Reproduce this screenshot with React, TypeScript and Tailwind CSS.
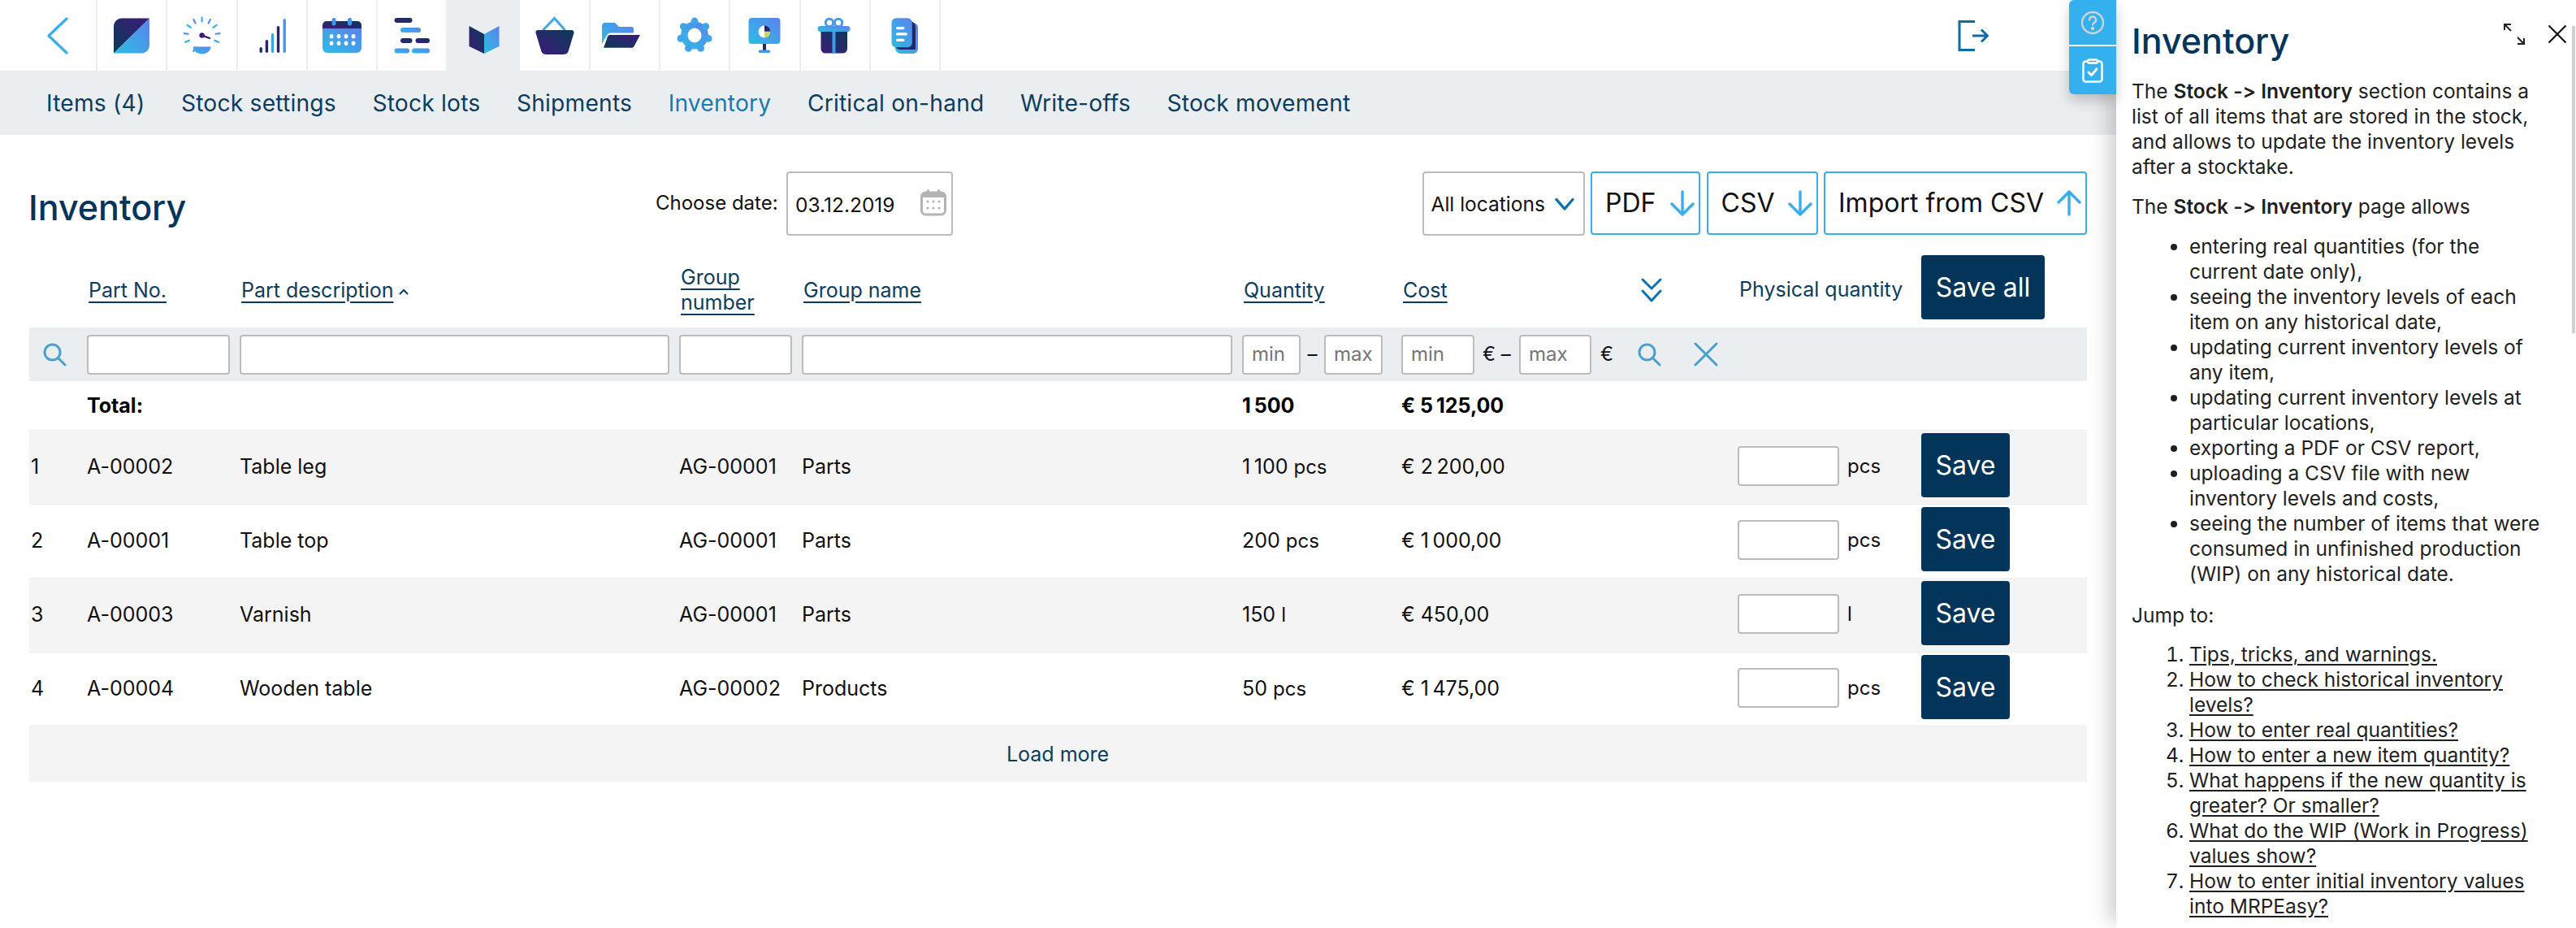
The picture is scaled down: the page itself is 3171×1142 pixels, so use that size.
import { ReactNode } from "react"

const rowGrid = "grid grid-cols-[71px_188px_541px_151px_542px_196px_275px_139px_226px_1fr] items-center"
const inputBox = "h-[49px] rounded-[4px] border-2 border-[#bcbcbc] bg-white"
const sortLink = "ml-[2px] text-[25px] leading-[31px] text-[#0c3c5e] underline decoration-2 underline-offset-[5px]"

const tabs = ["Items (4)", "Stock settings", "Stock lots", "Shipments", "Inventory", "Critical on-hand", "Write-offs", "Stock movement"]

const rows = [
  { n: 1, part: "A-00002", name: "Table leg", group: "AG-00001", groupName: "Parts", qty: "1\u2009100", unit: "pcs", cost: "€ 2\u2009200,00", odd: true },
  { n: 2, part: "A-00001", name: "Table top", group: "AG-00001", groupName: "Parts", qty: "200", unit: "pcs", cost: "€ 1\u2009000,00", odd: false },
  { n: 3, part: "A-00003", name: "Varnish", group: "AG-00001", groupName: "Parts", qty: "150", unit: "l", cost: "€ 450,00", odd: true },
  { n: 4, part: "A-00004", name: "Wooden table", group: "AG-00002", groupName: "Products", qty: "50", unit: "pcs", cost: "€ 1\u2009475,00", odd: false },
]

function Gradients() {
  return (
    <svg className="absolute h-0 w-0">
      <defs>
        <linearGradient id="light" x1="0" y1="1" x2="1" y2="0">
          <stop offset="0" stopColor="#2dbde2" />
          <stop offset="1" stopColor="#5b82ee" />
        </linearGradient>
        <linearGradient id="dark" x1="0" y1="1" x2="1" y2="0">
          <stop offset="0" stopColor="#3d1a7a" />
          <stop offset="1" stopColor="#0c3a58" />
        </linearGradient>
        <linearGradient id="darkUp" x1="0" y1="1" x2="1" y2="0">
          <stop offset="0" stopColor="#0c3a58" />
          <stop offset="1" stopColor="#3d1a7a" />
        </linearGradient>
      </defs>
    </svg>
  )
}

function Icon({ children }: { children: ReactNode }) {
  return (
    <svg viewBox="0 0 48 48" className="h-12 w-12 overflow-visible">
      {children}
    </svg>
  )
}

const gaugeTicks = [-90, -62, -35, -6, 22, 118, 158, 186, 215, 242]
const gearTeeth = [-90, -38.6, 12.8, 64.3, 115.7, 167.1, 218.6]

const navIcons: ReactNode[] = [
  <Icon>
    <path d="M46 2.5 2 45.5V13a10 10 0 0 1 10-10.5Z" fill="url(#darkUp)" />
    <path d="M46 2.5V35a10 10 0 0 1-10 10.5H2Z" fill="url(#light)" />
  </Icon>,
  <Icon>
    {gaugeTicks.map((a, i) => (
      <line
        key={a}
        x1={24.6 + 17 * Math.cos((a * Math.PI) / 180)}
        y1={23.5 + 17 * Math.sin((a * Math.PI) / 180)}
        x2={24.6 + 22 * Math.cos((a * Math.PI) / 180)}
        y2={23.5 + 22 * Math.sin((a * Math.PI) / 180)}
        stroke={i % 2 ? "#5a8bec" : "#36b0e6"}
        strokeWidth="2.2"
        strokeLinecap="round"
      />
    ))}
    <circle cx="24.6" cy="23.5" r="3.2" fill="#3d1a7a" />
    <line x1="24.6" y1="23.5" x2="34" y2="27" stroke="#3d1a7a" strokeWidth="2.2" strokeLinecap="round" />
    <path d="M13.6 37.5H35.6C35 43 30 46.5 24.6 46.5S14 43 13.6 37.5Z" fill="url(#light)" />
  </Icon>,
  <Icon>
    <rect x="8.5" y="38" width="3.4" height="7" rx="1.7" fill="#1d2f6a" />
    <rect x="15.7" y="29" width="3.4" height="16" rx="1.7" fill="#2a2470" />
    <rect x="22.8" y="21" width="3.4" height="24" rx="1.7" fill="#36a8e6" />
    <rect x="29.8" y="12" width="3.4" height="33" rx="1.7" fill="#2a2470" />
    <rect x="37.5" y="3" width="3.4" height="42" rx="1.7" fill="#4a95ea" />
  </Icon>,
  <Icon>
    <path d="M0 15V11a5 5 0 0 1 5-5h38a5 5 0 0 1 5 5v4Z" fill="url(#dark)" />
    <path d="M0 15h48v24a6 6 0 0 1-6 6H6a6 6 0 0 1-6-6Z" fill="url(#light)" />
    <rect x="11.5" y="2" width="5" height="9.5" rx="2.5" fill="#4298e8" />
    <rect x="31" y="2" width="5" height="9.5" rx="2.5" fill="#4298e8" />
    {[10, 19, 28, 37].map((x) => (
      <g key={x} fill="#fff">
        <ellipse cx={x + 1} cy="24.7" rx="2.4" ry="2.7" />
        <ellipse cx={x + 1} cy="33.2" rx="2.4" ry="2.7" />
      </g>
    ))}
  </Icon>,
  <Icon>
    <rect x="2.5" y="2" width="22" height="6" rx="3" fill="url(#dark)" />
    <rect x="10" y="14" width="25" height="6" rx="3" fill="url(#light)" />
    <rect x="10" y="27" width="14.5" height="6" rx="3" fill="url(#dark)" />
    <rect x="28.5" y="27" width="17.5" height="6" rx="3" fill="url(#dark)" />
    <rect x="2.5" y="39.5" width="18.5" height="6" rx="3" fill="url(#light)" />
    <rect x="24" y="39.5" width="22" height="6" rx="3" fill="url(#light)" />
  </Icon>,
  <Icon>
    <path d="M5.5 12 24 22V46L5.5 37Z" fill="url(#dark)" />
    <path d="M24 22 42.5 12V37L24 46Z" fill="url(#light)" />
  </Icon>,
  <Icon>
    <path d="M9.5 17 23.5 2.5 36.5 17" fill="none" stroke="#3fa8e8" strokeWidth="3" />
    <path d="M3 17H44.5a3 3 0 0 1 3 3.5L41 42a6.5 6.5 0 0 1-6 5H13a6.5 6.5 0 0 1-6-5L.5 20.5A3 3 0 0 1 3 17Z" fill="url(#dark)" />
  </Icon>,
  <Icon>
    <path d="M-4 12a4 4 0 0 1 4-4h12l5 5h15a3 3 0 0 1 3 3v4.5H6a5 5 0 0 0-4 3L-4 34Z" fill="url(#light)" />
    <path d="M5 23H43L35.5 37a3 3 0 0 1-2.5 1.7H-2L2 28a6 6 0 0 1 3-5Z" fill="url(#darkUp)" />
  </Icon>,
  <Icon>
    <circle cx="24" cy="23.5" r="17" fill="url(#light)" />
    {gearTeeth.map((a) => (
      <circle key={a} cx={24 + 17.5 * Math.cos((a * Math.PI) / 180)} cy={23.5 + 17.5 * Math.sin((a * Math.PI) / 180)} r="4.4" fill="#40a4e8" />
    ))}
    <ellipse cx="24" cy="23.5" rx="8.5" ry="9" fill="#fff" />
  </Icon>,
  <Icon>
    <rect x="3.5" y="2" width="39" height="32" rx="4" fill="url(#light)" />
    <rect x="21" y="34" width="4" height="8" fill="#1f2f68" />
    <rect x="16" y="41.5" width="14" height="3.5" rx="1.5" fill="#3f9ae8" />
    <path d="M23 11.5a7.3 7.3 0 1 0 0 15Z" fill="#fff" />
    <path d="M23 11.5a7.3 7.3 0 0 1 7.3 7.3H23Z" fill="#2c2270" />
    <path d="M23 18.8h7.3a7.3 7.3 0 0 1-7.3 7.7Z" fill="#c4db5c" />
  </Icon>,
  <Icon>
    <circle cx="17" cy="8" r="4.7" fill="#fff" stroke="#4a98e8" strokeWidth="3" />
    <circle cx="28" cy="8" r="4.7" fill="#fff" stroke="#4a98e8" strokeWidth="3" />
    <path d="M6.5 18.5H39V40a5.5 5.5 0 0 1-5.5 5.5H12A5.5 5.5 0 0 1 6.5 40Z" fill="url(#dark)" />
    <rect x="20.5" y="18" width="4" height="28" fill="#3a9fe4" />
    <rect x="2.5" y="12" width="40" height="7" rx="3.5" fill="url(#light)" />
  </Icon>,
  <Icon>
    <path d="M12 8h22a6 6 0 0 1 6 6v26a6 6 0 0 1-6 6H19a7 7 0 0 1-7-7Z" fill="url(#light)" />
    <path d="M12 6h18a7 7 0 0 1 7 7v28H18a6 6 0 0 1-6-6Z" fill="#1f2a66" />
    <rect x="7.5" y="2.3" width="25.3" height="36" rx="5.5" fill="url(#light)" />
    <rect x="13" y="13" width="10.5" height="3.2" rx="1.6" fill="#fff" />
    <rect x="13" y="20.3" width="14" height="3.2" rx="1.6" fill="#fff" />
    <rect x="13" y="27.7" width="10.5" height="3.2" rx="1.6" fill="#fff" />
  </Icon>,
]

function Chevron({ className }: { className: string }) {
  return (
    <svg viewBox="0 0 24 24" fill="none" strokeLinecap="round" strokeLinejoin="round" className={className}>
      <path d="M2 6.5 12 18 22 6.5" />
    </svg>
  )
}

function ArrowV({ up }: { up?: boolean }) {
  return (
    <svg viewBox="0 0 30 32" fill="none" stroke="#38aeee" strokeWidth="3.4" strokeLinecap="round" strokeLinejoin="round" className="h-[32px] w-[30px] shrink-0">
      {up ? <path d="M15 30V2M2 15 15 2 28 15" /> : <path d="M15 2V30M2 17 15 30 28 17" />}
    </svg>
  )
}

function Search() {
  return (
    <svg viewBox="0 0 30 30" fill="none" stroke="#4aa0cf" strokeWidth="3" strokeLinecap="round" className="h-[30px] w-[30px]">
      <circle cx="12.5" cy="12.5" r="9.5" />
      <path d="M19.5 19.5 28 28" />
    </svg>
  )
}

export default function App() {
  return (
    <div className="flex h-screen w-full overflow-hidden bg-white font-['Inter',sans-serif] text-[#111] [font-feature-settings:'calt'_0]">
      <Gradients />
      <main className="w-[2605px] shrink-0">
        <nav className="flex h-[87px] items-stretch">
          <div className="flex w-[120px] items-center justify-end border-r-2 border-[#eceff2] pr-[34px]">
            <svg viewBox="0 0 26 46" fill="none" stroke="#38aeee" strokeWidth="3.2" strokeLinecap="round" strokeLinejoin="round" className="h-[46px] w-[26px]">
              <path d="M24 2 2 23 24 44" />
            </svg>
          </div>
          {navIcons.map((icon, i) => (
            <div
              key={i}
              className={
                i === 5
                  ? "flex w-[89px] items-center justify-center bg-[#ebeef1]"
                  : "flex w-[86.3px] items-center justify-center border-r-2 border-[#eceff2]"
              }
            >
              {icon}
            </div>
          ))}
          <div className="flex flex-1 items-center justify-end pr-[157px]">
            <svg viewBox="0 0 38 38" fill="none" stroke="#0b6ea8" strokeWidth="3" className="h-[38px] w-[38px]">
              <path d="M21 1.5H2V36.5H21" />
              <path d="M18 19H36M29 11.5 36.5 19 29 26.5" />
            </svg>
          </div>
        </nav>

        <div className="flex h-[79px] items-center gap-[44.5px] bg-[#ebeef1] pt-[2px] pl-[57px] text-[28.2px] tracking-[0.2px]">
          {tabs.map((t) => (
            <span key={t} className={t === "Inventory" ? "text-[#1b79af]" : "text-[#0c3c5e]"}>
              {t}
            </span>
          ))}
        </div>

        <div className="pl-[36px] pr-[36px]">
          <div className="flex h-[148px] items-start pt-[45px]">
            <h1 className="mt-[18px] -ml-[1px] w-[772px] text-[43px] leading-[52px] font-medium text-[#03355a]">Inventory</h1>
            <span className="mt-[15px] w-[161px] text-[24px] leading-[48px]">Choose date:</span>
            <div className="flex h-[79px] w-[205px] items-center justify-between rounded-[4px] border-2 border-[#bcbcbc] pr-[6px] pl-[9px]">
              <span className="mt-[3px] text-[24.5px]">03.12.2019</span>
              <svg viewBox="0 0 32 34" className="mb-[4px] h-[34px] w-[32px]">
                <rect x="1.5" y="5" width="29" height="27" rx="5" fill="none" stroke="#b3b3b3" strokeWidth="3" />
                <path d="M1 11V9a4 4 0 0 1 4-4h22a4 4 0 0 1 4 4v2Z" fill="#b3b3b3" />
                <rect x="8" y="1" width="3" height="7" rx="1.5" fill="#b3b3b3" />
                <rect x="21" y="1" width="3" height="7" rx="1.5" fill="#b3b3b3" />
                {[9, 16, 23].map((x) => (
                  <g key={x} fill="#b3b3b3">
                    <circle cx={x} cy="16" r="1.6" />
                    <circle cx={x} cy="24" r="1.6" />
                  </g>
                ))}
              </svg>
            </div>
            <div className="ml-auto flex gap-[7.5px]">
              <div className="flex h-[79px] w-[200px] items-center gap-[11px] rounded-[4px] border-2 border-[#bcbcbc] pl-[9px] text-[24.5px]">
                <span className="mt-[2px] whitespace-nowrap">All locations</span>
                <Chevron className="h-[24px] w-[26px] shrink-0 stroke-[#0b72ac] stroke-[3.4]" />
              </div>
              <div className="flex h-[78px] w-[135px] items-center justify-between rounded-[4px] border-2 border-[#38aeee] pr-[5px] pl-[16px] text-[32px]">
                PDF
                <ArrowV />
              </div>
              <div className="flex h-[78px] w-[137px] items-center justify-between rounded-[4px] border-2 border-[#38aeee] pr-[5px] pl-[16px] text-[32px]">
                CSV
                <ArrowV />
              </div>
              <div className="flex h-[78px] w-[324px] items-center justify-between rounded-[4px] border-2 border-[#38aeee] pr-[5px] pl-[16px] text-[32px]">
                Import from CSV
                <ArrowV up />
              </div>
            </div>
          </div>

          <div className={`${rowGrid} h-[89px] pb-[3px]`}>
            <span />
            <a className={sortLink}>Part No.</a>
            <span className="flex items-center gap-[6px]">
              <a className={sortLink}>Part description</a>
              <svg viewBox="0 0 12 8" fill="none" stroke="#0c3c5e" strokeWidth="2" className="mt-[3px] h-[8px] w-[12px]">
                <path d="M1 7 6 2l5 5" />
              </svg>
            </span>
            <a className={sortLink}>
              Group
              <br />
              number
            </a>
            <a className={sortLink}>Group name</a>
            <span>
              <a className={sortLink}>Quantity</a>
            </span>
            <span>
              <a className={sortLink}>Cost</a>
            </span>
            <span className="pl-[20px]">
              <svg viewBox="0 0 26 30" fill="none" stroke="#0e74b0" strokeWidth="3" strokeLinecap="round" strokeLinejoin="round" className="h-[30px] w-[26px]">
                <path d="M2 2 13 13 24 2M2 16 13 28 24 16" />
              </svg>
            </span>
            <span className="ml-[2px] text-[25px] text-[#0c3c5e]">Physical quantity</span>
            <button className="h-[79px] w-[152px] self-start rounded-[4px] bg-[#03355a] text-[32px] text-white">Save all</button>
          </div>

          <div className={`${rowGrid} h-[66px] bg-[#ebeef1]`}>
            <span className="pl-[16px]">
              <Search />
            </span>
            <div className={`${inputBox} mr-[12px]`} />
            <div className={`${inputBox} mr-[12px]`} />
            <div className={`${inputBox} mr-[12px]`} />
            <div className={`${inputBox} mr-[12px]`} />
            <div className="flex items-center text-[24px]">
              <div className={`${inputBox} flex w-[72px] items-center pl-[10px] text-[#757575]`}>min</div>
              <span className="w-[29px] text-center">–</span>
              <div className={`${inputBox} flex w-[72px] items-center pl-[10px] text-[#757575]`}>max</div>
            </div>
            <div className="flex items-center text-[24px]">
              <div className={`${inputBox} flex w-[90px] items-center pl-[10px] text-[#757575]`}>min</div>
              <span className="ml-[10px] w-[45px]">€ –</span>
              <div className={`${inputBox} flex w-[89px] items-center pl-[10px] text-[#757575]`}>max</div>
              <span className="ml-[11px]">€</span>
            </div>
            <div className="col-span-2 flex items-center gap-[40px] pl-[15px]">
              <Search />
              <svg viewBox="0 0 30 30" fill="none" stroke="#4a9ecb" strokeWidth="3" strokeLinecap="round" className="h-[30px] w-[30px]">
                <path d="M2 2 28 28M28 2 2 28" />
              </svg>
            </div>
          </div>

          <div className={`${rowGrid} h-[60px] pt-[2px] text-[25px] font-bold text-black`}>
            <span />
            <span>Total:</span>
            <span />
            <span />
            <span />
            <span>1{"\u2009"}500</span>
            <span>€ 5{"\u2009"}125,00</span>
          </div>

          {rows.map((r) => (
            <div key={r.n} className={`${rowGrid} h-[91px] border-t border-[#eceef0] text-[25px] ${r.odd ? "bg-[#f4f4f5]" : "bg-white"}`}>
              <span className="pl-[2px]">{r.n}</span>
              <span>{r.part}</span>
              <span>{r.name}</span>
              <span>{r.group}</span>
              <span>{r.groupName}</span>
              <span>
                {r.qty} <span className="text-[24px]">{r.unit}</span>
              </span>
              <span>{r.cost}</span>
              <span />
              <div className="mb-[2px] flex items-center">
                <div className={`${inputBox} mb-[2px] w-[125px]`} />
                <span className="ml-[10px] text-[24px]">{r.unit}</span>
              </div>
              <button className="mb-[5px] h-[79px] w-[109px] rounded-[4px] bg-[#03355a] text-[32px] text-white">Save</button>
            </div>
          ))}

          <div className="flex h-[69px] items-center justify-center border-t border-[#eceef0] bg-[#f4f4f5] pt-[2px] pr-[1px] text-[25px] text-[#0c3c5e]">Load more</div>
        </div>
      </main>

      <aside className="relative w-[566px] shrink-0 bg-white pt-[20px] pl-[19px] text-[24.5px] leading-[31px] text-[#1f1f1f] shadow-[-18px_0_22px_-8px_rgba(0,0,0,0.18)]">
        <div className="absolute top-0 -left-[58px] w-[58px] overflow-hidden rounded-l-[6px] shadow-[0_8px_16px_rgba(0,0,0,0.2)]">
          <div className="flex h-[57px] items-center justify-center border-b-2 border-white bg-[#35b0ee]">
            <svg viewBox="0 0 30 30" className="h-[30px] w-[30px]" fill="none" stroke="#cfd3d6" strokeWidth="2.4">
              <circle cx="15" cy="15" r="13" />
              <path d="M11 11.5a4 4 0 1 1 5.5 3.7c-1 .5-1.5 1.2-1.5 2.3" strokeLinecap="round" />
              <circle cx="15" cy="22" r="1" fill="#cfd3d6" />
            </svg>
          </div>
          <div className="flex h-[59px] items-center justify-center bg-[#35b0ee]">
            <svg viewBox="0 0 26 30" className="h-[30px] w-[26px]" fill="none" stroke="#fff" strokeWidth="2.4" strokeLinejoin="round">
              <rect x="1.5" y="3.5" width="23" height="25" rx="3" />
              <rect x="7" y="1.5" width="12" height="4" rx="1.5" fill="#35b0ee" />
              <path d="M8 17l3.5 3.5L18 13" strokeLinecap="round" strokeWidth="3" />
            </svg>
          </div>
        </div>
        <div className="absolute top-[32px] right-[1px] h-[378px] w-[4px] bg-[#d0d0d0]" />
        <div className="absolute top-[29px] right-[11px] flex items-center gap-[28px]">
          <svg viewBox="0 0 26 26" fill="none" stroke="#222" strokeWidth="2" className="h-[26px] w-[26px]">
            <path d="M1 8V1h8M1 1l8 8M25 18v7h-8M25 25l-8-8" />
          </svg>
          <svg viewBox="0 0 24 24" fill="none" stroke="#111" strokeWidth="2.2" className="h-[24px] w-[24px]">
            <path d="M1.5 1.5 22.5 22.5M22.5 1.5 1.5 22.5" />
          </svg>
        </div>

        <h2 className="text-[43px] leading-[60px] font-medium text-[#03355a]">Inventory</h2>
        <p className="mt-[17px]">
          The <b className="font-semibold">Stock -&gt; Inventory</b> section contains a
          <br />
          list of all items that are stored in the stock,
          <br />
          and allows to update the inventory levels
          <br />
          after a stocktake.
        </p>
        <p className="mt-[18px]">
          The <b className="font-semibold">Stock -&gt; Inventory</b> page allows
        </p>
        <ul className="mt-[18px] list-disc pl-[71px]">
          <li>entering real quantities (for the<br />current date only),</li>
          <li>seeing the inventory levels of each<br />item on any historical date,</li>
          <li>updating current inventory levels of<br />any item,</li>
          <li>updating current inventory levels at<br />particular locations,</li>
          <li>exporting a PDF or CSV report,</li>
          <li>uploading a CSV file with new<br />inventory levels and costs,</li>
          <li>seeing the number of items that were<br />consumed in unfinished production<br />(WIP) on any historical date.</li>
        </ul>
        <p className="mt-[20px]">Jump to:</p>
        <ol className="mt-[17px] list-decimal pl-[71px] underline underline-offset-[3px]">
          <li>Tips, tricks, and warnings.</li>
          <li>How to check historical inventory<br />levels?</li>
          <li>How to enter real quantities?</li>
          <li>How to enter a new item quantity?</li>
          <li>What happens if the new quantity is<br />greater? Or smaller?</li>
          <li>What do the WIP (Work in Progress)<br />values show?</li>
          <li>How to enter initial inventory values<br />into MRPEasy?</li>
        </ol>
      </aside>
    </div>
  )
}
